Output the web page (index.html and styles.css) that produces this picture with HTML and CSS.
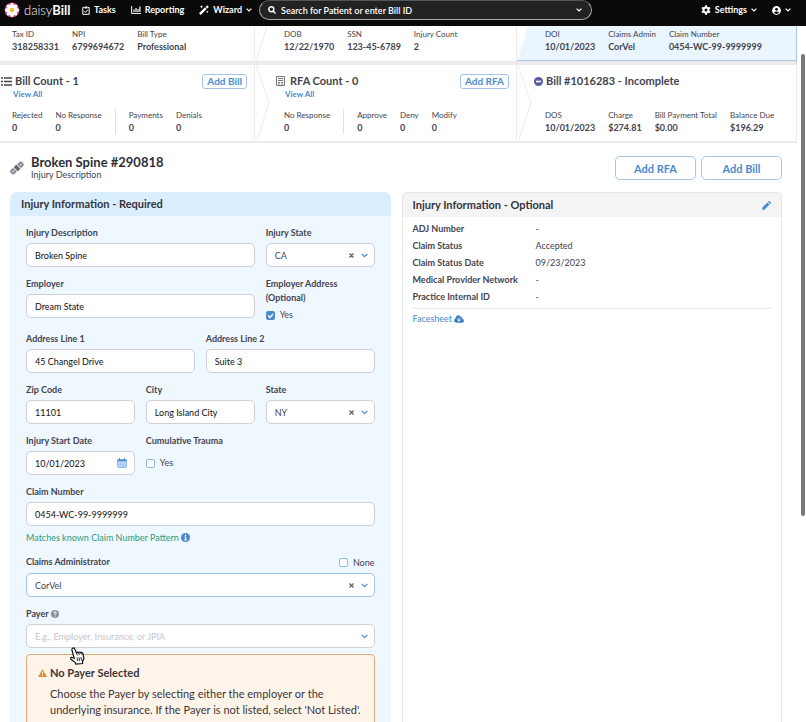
FILE: index.html
```html
<!DOCTYPE html>
<html lang="en">
<head>
    <meta charset="UTF-8">
    <meta name="viewport" content="width=device-width, initial-scale=1.0">
    <title>daisyBill - Broken Spine #290818</title>
    <link rel="stylesheet" href="styles.css">
</head>
<body>
    <header class="navbar">
        <a class="logo" href="#">
            <svg width="16" height="16" viewBox="0 0 16 16">
                <circle cx="8" cy="8" r="7.5" fill="#c93b86"/>
                <g fill="#fff">
                    <ellipse cx="8" cy="4" rx="2" ry="3"/>
                    <ellipse cx="8" cy="12" rx="2" ry="3"/>
                    <ellipse cx="4" cy="8" rx="3" ry="2"/>
                    <ellipse cx="12" cy="8" rx="3" ry="2"/>
                    <ellipse cx="8" cy="4" rx="2" ry="3" transform="rotate(45 8 8)"/>
                    <ellipse cx="8" cy="4" rx="2" ry="3" transform="rotate(135 8 8)"/>
                    <ellipse cx="8" cy="4" rx="2" ry="3" transform="rotate(225 8 8)"/>
                    <ellipse cx="8" cy="4" rx="2" ry="3" transform="rotate(315 8 8)"/>
                </g>
                <circle cx="8" cy="8" r="2.3" fill="#f3bd3c"/>
            </svg>
            <span>daisy<b>Bill</b></span>
        </a>
        <nav class="menu">
            <a href="#">
                <svg width="8" height="9" viewBox="0 0 8 9" fill="none" stroke="currentColor"><path d="M2.2 1.5H.8v6.8h6.4V1.5H5.8"/><path d="M2.5 1.5h3" stroke-width="2"/><path d="M2.3 5l1.3 1.3 2.3-2.5"/></svg>
                Tasks
            </a>
            <a href="#">
                <svg width="10" height="8" viewBox="0 0 10 8" fill="none" stroke="currentColor"><path d="M.6 0v7.4H10"/><path d="M3 6V3.5M5 6V2M7 6V3M8.9 6V.5" stroke-width="1.2"/></svg>
                Reporting
            </a>
            <a href="#">
                <svg width="10" height="10" viewBox="0 0 10 10" fill="currentColor"><path d="M0 8.3L6 2.3l1.7 1.7-6 6zM6.6 1.7L8.1.2 9.8 1.9 8.3 3.4zM2.5 0l.5 1.2 1.2.5L3 2.2l-.5 1.2L2 2.2.8 1.7 2 1.2zM8.3 5.5l.4 1 1 .4-1 .4-.4 1-.4-1-1-.4 1-.4z"/></svg>
                Wizard
                <svg class="caret" width="6" height="4" viewBox="0 0 6 4"><path d="M.6.6L3 3 5.4.6"/></svg>
            </a>
        </nav>
        <div class="search">
            <svg width="8" height="8" viewBox="0 0 8 8" fill="none" stroke="#fff" stroke-width="1.4"><circle cx="3.3" cy="3.3" r="2.5"/><path d="M5.2 5.2L7.5 7.5"/></svg>
            <input type="text" aria-label="Search" placeholder="Search for Patient or enter Bill ID">
            <svg class="caret" width="6" height="4" viewBox="0 0 6 4"><path d="M.6.6L3 3 5.4.6"/></svg>
        </div>
        <nav class="menu account">
            <a href="#">
                <svg width="10" height="10" viewBox="0 0 10 10"><circle cx="5" cy="5" r="2.5" fill="none" stroke="currentColor" stroke-width="2"/><path d="M5 .3v1.8M5 7.9v1.8M1 2.65l1.6.9M7.4 6.45l1.6.9M1 7.35l1.6-.9M7.4 3.55l1.6-.9" stroke="currentColor" stroke-width="2"/></svg>
                Settings
                <svg class="caret" width="6" height="4" viewBox="0 0 6 4"><path d="M.6.6L3 3 5.4.6"/></svg>
            </a>
            <a href="#" aria-label="Account">
                <svg width="9" height="9" viewBox="0 0 9 9"><circle cx="4.5" cy="4.5" r="4.4" fill="currentColor"/><circle cx="4.5" cy="3.3" r="1.4" fill="#0a0a0a"/><path d="M1.8 6.8Q4.5 4 7.2 6.8Q4.5 9 1.8 6.8" fill="#0a0a0a"/></svg>
                <svg class="caret" width="6" height="4" viewBox="0 0 6 4"><path d="M.6.6L3 3 5.4.6"/></svg>
            </a>
        </nav>
    </header>

    <div class="summary">
        <section class="card top">
            <dl class="stats">
                <div><dt>Tax ID</dt><dd>318258331</dd></div>
                <div><dt>NPI</dt><dd>6799694672</dd></div>
                <div><dt>Bill Type</dt><dd>Professional</dd></div>
            </dl>
        </section>
        <section class="card top">
            <svg class="edge" width="14" height="36" viewBox="0 0 14 36"><path d="M12 0L1 36"/></svg>
            <dl class="stats">
                <div><dt>DOB</dt><dd>12/22/1970</dd></div>
                <div><dt>SSN</dt><dd>123-45-6789</dd></div>
                <div><dt>Injury Count</dt><dd>2</dd></div>
            </dl>
        </section>
        <section class="card top active">
            <dl class="stats">
                <div><dt>DOI</dt><dd>10/01/2023</dd></div>
                <div><dt>Claims Admin</dt><dd>CorVel</dd></div>
                <div><dt>Claim Number</dt><dd>0454-WC-99-9999999</dd></div>
            </dl>
        </section>

        <section class="card">
            <div class="card-head">
                <svg width="11" height="9" viewBox="0 0 11 9" stroke="#44444f" stroke-width="1.5"><path d="M0 1h2M3 1h8M0 4.5h2M3 4.5h8M0 8h2M3 8h8"/></svg>
                <h2>Bill Count - 1</h2>
                <button class="btn small" type="button">Add Bill</button>
            </div>
            <a class="view-all" href="#">View All</a>
            <dl class="stats">
                <div><dt>Rejected</dt><dd>0</dd></div>
                <div><dt>No Response</dt><dd>0</dd></div>
                <div class="split"><dt>Payments</dt><dd>0</dd></div>
                <div><dt>Denials</dt><dd>0</dd></div>
            </dl>
        </section>
        <section class="card">
            <svg class="edge" width="16" height="78" viewBox="0 0 16 78"><path d="M1 0l13 38L1 78"/></svg>
            <div class="card-head">
                <svg width="9" height="10" viewBox="0 0 9 10" fill="none" stroke="#777780"><path d="M.5.5h8v9h-8zM2 2.5h5M2 4.5h5M2 6.5h2M5 6.5h2M2 8h2M5 8h2"/></svg>
                <h2>RFA Count - 0</h2>
                <button class="btn small" type="button">Add RFA</button>
            </div>
            <a class="view-all" href="#">View All</a>
            <dl class="stats">
                <div><dt>No Response</dt><dd>0</dd></div>
                <div class="split"><dt>Approve</dt><dd>0</dd></div>
                <div><dt>Deny</dt><dd>0</dd></div>
                <div><dt>Modify</dt><dd>0</dd></div>
            </dl>
        </section>
        <section class="card">
            <svg class="edge" width="16" height="78" viewBox="0 0 16 78"><path d="M1 0l13 38L1 78"/></svg>
            <div class="card-head">
                <svg width="9" height="9" viewBox="0 0 9 9"><circle cx="4.5" cy="4.5" r="4.5" fill="#5b5ba8"/><path d="M2 4.5h5" stroke="#fff" stroke-width="1.6"/></svg>
                <h2>Bill #1016283 - Incomplete</h2>
            </div>
            <dl class="stats">
                <div><dt>DOS</dt><dd>10/01/2023</dd></div>
                <div><dt>Charge</dt><dd>$274.81</dd></div>
                <div><dt>Bill Payment Total</dt><dd>$0.00</dd></div>
                <div><dt>Balance Due</dt><dd>$196.29</dd></div>
            </dl>
        </section>
    </div>

    <main class="page">
        <div class="title-row">
            <svg width="14" height="14" viewBox="0 0 14 14">
                <g transform="rotate(-42 7 7)">
                    <rect x="-1" y="4.2" width="16" height="5.600" rx="2.8" fill="#8d8d98"/>
                    <path d="M4.800 4v6M9.200 4v6" stroke="#fff"/>
                    <rect x="5.300" y="4.200" width="3.400" height="5.600" fill="#666672"/>
                    <path d="M1 7h2M11 7h2" stroke="#e4e4ea"/>
                </g>
            </svg>
            <div class="title">
                <h1>Broken Spine #290818</h1>
                <p>Injury Description</p>
            </div>
            <button class="btn" type="button">Add RFA</button>
            <button class="btn" type="button">Add Bill</button>
        </div>

        <div class="panels">
            <form class="panel required">
                <h2 class="panel-head">Injury Information - Required</h2>
                <div class="fields">
                    <div class="field w4">
                        <label for="description">Injury Description</label>
                        <input class="control" id="description" type="text" value="Broken Spine">
                    </div>
                    <div class="field w2">
                        <label for="injury-state">Injury State</label>
                        <div class="select">
                            <select class="control" id="injury-state"><option>CA</option></select>
                            <button class="clear" type="button" aria-label="Clear"><svg width="5" height="5" viewBox="0 0 5 5"><path d="M.5.5l4 4M4.5.5l-4 4"/></svg></button>
                            <svg class="caret" width="7" height="5" viewBox="0 0 7 5"><path d="M.7.8l2.8 2.8L6.3.8"/></svg>
                        </div>
                    </div>

                    <div class="field w4">
                        <label for="employer">Employer</label>
                        <input class="control" id="employer" type="text" value="Dream State">
                    </div>
                    <div class="field w2">
                        <span class="label">Employer Address<br>(Optional)</span>
                        <label class="check"><input type="checkbox" checked> Yes</label>
                    </div>

                    <div class="field w3">
                        <label for="address1">Address Line 1</label>
                        <input class="control" id="address1" type="text" value="45 Changel Drive">
                    </div>
                    <div class="field w3">
                        <label for="address2">Address Line 2</label>
                        <input class="control" id="address2" type="text" value="Suite 3">
                    </div>

                    <div class="field w2">
                        <label for="zip">Zip Code</label>
                        <input class="control" id="zip" type="text" value="11101">
                    </div>
                    <div class="field w2">
                        <label for="city">City</label>
                        <input class="control" id="city" type="text" value="Long Island City">
                    </div>
                    <div class="field w2">
                        <label for="state">State</label>
                        <div class="select">
                            <select class="control" id="state"><option>NY</option></select>
                            <button class="clear" type="button" aria-label="Clear"><svg width="5" height="5" viewBox="0 0 5 5"><path d="M.5.5l4 4M4.5.5l-4 4"/></svg></button>
                            <svg class="caret" width="7" height="5" viewBox="0 0 7 5"><path d="M.7.8l2.8 2.8L6.3.8"/></svg>
                        </div>
                    </div>

                    <div class="field w2">
                        <label for="start-date">Injury Start Date</label>
                        <div class="select">
                            <input class="control" id="start-date" type="text" value="10/01/2023">
                            <svg class="calendar" width="10" height="10" viewBox="0 0 10 10"><rect x=".5" y="1.5" width="9" height="8" rx="1" fill="#b9d6f5" stroke="#8db8e8"/><path d="M.5 2.5h9" stroke="#4a8bd0" stroke-width="1.5"/><path d="M2.5 0v2M7.5 0v2" stroke="#4a8bd0"/><path d="M3.5 4v5M6.5 4v5M1 6.5h8" stroke="#9cc3ee" stroke-width=".6"/></svg>
                        </div>
                    </div>
                    <div class="field w2">
                        <span class="label">Cumulative Trauma</span>
                        <label class="check tall"><input type="checkbox"> Yes</label>
                    </div>

                    <div class="field w6">
                        <label for="claim-number">Claim Number</label>
                        <input class="control" id="claim-number" type="text" value="0454-WC-99-9999999">
                        <p class="hint">Matches known Claim Number Pattern
                            <svg width="9" height="9" viewBox="0 0 9 9"><circle cx="4.5" cy="4.5" r="4.5" fill="#4a86cf"/><path d="M4.5 1.5v1.4M3.6 4.2h1v2.6M3.4 6.9h2.4" stroke="#fff" stroke-width="1.2" fill="none"/></svg>
                        </p>
                    </div>

                    <div class="field w6">
                        <div class="label-row">
                            <label for="administrator">Claims Administrator</label>
                            <label class="check"><input type="checkbox"> None</label>
                        </div>
                        <div class="select">
                            <select class="control focused" id="administrator"><option>CorVel</option></select>
                            <button class="clear" type="button" aria-label="Clear"><svg width="5" height="5" viewBox="0 0 5 5"><path d="M.5.5l4 4M4.5.5l-4 4"/></svg></button>
                            <svg class="caret" width="7" height="5" viewBox="0 0 7 5"><path d="M.7.8l2.8 2.8L6.3.8"/></svg>
                        </div>
                    </div>

                    <div class="field w6">
                        <label for="payer">Payer
                            <svg width="8" height="8" viewBox="0 0 8 8" fill="none"><circle cx="4" cy="4" r="4" fill="#8d919c"/><path d="M2.7 3.1Q2.8 1.9 4 1.9T5.3 3Q5.3 3.6 4 4.3V4.9M4 5.6v1" stroke="#fff"/></svg>
                        </label>
                        <div class="select">
                            <input class="control" id="payer" type="text" placeholder="E.g., Employer, Insurance, or JPIA">
                            <svg class="caret" width="7" height="5" viewBox="0 0 7 5"><path d="M.7.8l2.8 2.8L6.3.8"/></svg>
                            <svg class="pointer" width="16" height="18" viewBox="0 0 16 18"><path d="M3.6 1.2Q4.8.4 5.6 1.7L7.5 6Q8.4 4.6 9.6 5.6Q10.8 4.5 11.8 5.6Q13.3 5 13.8 6.5L14.8 10.5Q15 12.5 13.5 14L13.6 16.5L6.8 17.2L6.3 15.5L2 12.3Q1 10.8 2.5 10.3L5.2 11.3L2.9 3Q2.7 1.7 3.6 1.2Z" fill="#fff" stroke="#111" stroke-width="1.2"/><path d="M7.5 6l.9 2.4M9.7 5.7l.7 2.3M11.9 5.7l.6 2M8 10.5l.6 3.5M10 10.3l.5 3.5M12 10l.4 3.5" stroke="#111" stroke-width=".9"/></svg>
                        </div>
                        <div class="alert">
                            <svg width="9" height="8" viewBox="0 0 9 8"><path d="M4.5 0L9 8H0z" fill="#e38b36"/><path d="M4.5 2.5v2.7M4.5 6v1" stroke="#fff"/></svg>
                            <div>
                                <h3>No Payer Selected</h3>
                                <p>Choose the Payer by selecting either the employer or the underlying insurance. If the Payer is not listed, select 'Not Listed'.</p>
                            </div>
                        </div>
                    </div>
                </div>
            </form>

            <section class="panel optional">
                <h2 class="panel-head">Injury Information - Optional
                    <a href="#" aria-label="Edit"><svg width="9" height="9" viewBox="0 0 9 9" fill="#4a8bd0"><path d="M0 9l.6-2.7L5.4 1.5l2.1 2.1L2.7 8.4zM6 .9L6.7.2Q7.2-.2 7.7.3L8.7 1.3Q9.2 1.8 8.8 2.3L8.1 3z"/></svg></a>
                </h2>
                <dl class="details">
                    <dt>ADJ Number</dt><dd>-</dd>
                    <dt>Claim Status</dt><dd>Accepted</dd>
                    <dt>Claim Status Date</dt><dd>09/23/2023</dd>
                    <dt>Medical Provider Network</dt><dd>-</dd>
                    <dt>Practice Internal ID</dt><dd>-</dd>
                </dl>
                <a class="facesheet" href="#">Facesheet
                    <svg width="10" height="8" viewBox="0 0 10 8"><path d="M2.3 7.7Q0 7.5 0 5.3Q.2 3.6 1.6 3.2Q1.7.3 4.4.2Q6.3.2 7 2Q8.5 2 8.4 3.7Q10 4.2 10 5.7Q9.8 7.6 8 7.7Z" fill="#3f7fc6"/><path d="M5 2.8v3M3.4 4.6L5 6.2l1.6-1.6" stroke="#fff" fill="none"/></svg>
                </a>
            </section>
        </div>
    </main>
    <div class="scroll-thumb"></div>
</body>
</html>
```
FILE: styles.css
```css
* {
    box-sizing: border-box;
}
body {
    margin: 0;
    height: 100vh;
    overflow: hidden;
    position: relative;
    font-family: Lato, "Open Sans", sans-serif;
    font-size: 9px;
    line-height: 14px;
    color: #44444f;
    background-color: #fff;
}
h1, h2, h3, p, dl, dd {
    margin: 0;
}
a {
    color: #4a8bd0;
    text-decoration: none;
}
svg {
    flex: none;
}
input, select, button {
    font-family: inherit;
    font-size: 9px;
}
.caret {
    fill: none;
    stroke: currentColor;
    stroke-width: 1.2;
}

/* navigation */
.navbar {
    display: flex;
    align-items: flex-start;
    height: 26px;
    padding: 0 15px 0 4px;
    background-color: #0a0a0a;
    color: #fff;
}
.navbar a {
    display: flex;
    align-items: center;
    gap: 4px;
    height: 20px;
    color: #fff;
    font-weight: bold;
}
.navbar .logo {
    width: 78px;
    font-size: 13px;
    font-weight: 300;
}
.logo b {
    font-weight: bold;
}
.menu {
    display: flex;
    gap: 15px;
    margin-right: 7px;
}
.menu.account {
    margin: 0 0 0 auto;
}
.search {
    display: flex;
    align-items: center;
    gap: 5px;
    flex: 0 1 333px;
    height: 20px;
    padding: 0 9px 0 8px;
    border: 1px solid #aaa;
    border-top-color: #555;
    border-radius: 10px;
    background-color: #222;
}
.search input {
    flex: 1;
    min-width: 0;
    padding: 0;
    border: 0;
    background: none;
    color: #fff;
    font-weight: 600;
}
.search input::placeholder {
    color: #fff;
    opacity: 1;
}

/* summary cards */
.summary {
    display: grid;
    grid-template-columns: 255fr 262fr 280fr;
    margin-right: 9px;
}
.card {
    position: relative;
    height: 78px;
    padding: 8px 7px 0 29px;
    border-bottom: 2px solid #ececec;
    border-right: 1px solid #ececec;
}
.card:nth-child(3n + 1) {
    padding-left: 12px;
}
.card:nth-child(3n) {
    padding-left: 28px;
}
.card.top {
    height: 39px;
    padding-top: 2px;
    border-bottom: 4px solid #ececec;
}
.card.active {
    background: linear-gradient(107deg, #fff 10px, #ebf5fe 11px);
    border-right-color: #a9c9ea;
    box-shadow: inset 0 -1px #a9c9ea;
}
.edge {
    position: absolute;
    top: 0;
    left: 0;
    fill: none;
    stroke: #ececec;
}
.card-head {
    display: flex;
    align-items: center;
    gap: 3px;
    height: 16px;
    margin-left: -11px;
}
.card:nth-child(5) .card-head {
    gap: 5px;
    margin-left: -8px;
}
.card-head h2 {
    flex: 1;
    font-size: 11px;
}
.view-all {
    display: block;
    margin: 1px 0 0 1px;
    font-size: 8px;
    font-weight: bold;
    line-height: 8px;
}
.stats {
    display: flex;
    gap: 13px;
}
.card:not(.top) .stats {
    position: absolute;
    bottom: 7px;
}
.stats dt {
    font-size: 8px;
    line-height: 12px;
}
.stats dd {
    font-weight: bold;
    line-height: 13px;
}
.stats .split {
    padding-left: 13px;
    border-left: 1px solid #e0e0e0;
}

/* buttons */
.btn {
    width: 81px;
    height: 24px;
    border: 1px solid #a5c5e8;
    border-radius: 5px;
    background-color: #fff;
    color: #4a8bd0;
    font-size: 11px;
    font-weight: bold;
}
.btn.small {
    width: auto;
    height: 15px;
    padding: 0 4px;
    border-radius: 3px;
    font-size: 10px;
    line-height: 12px;
}

/* page */
.page {
    padding: 12px 24px 0 10px;
}
.title-row {
    display: flex;
    align-items: center;
    gap: 5px;
    margin-bottom: 11px;
}
.title {
    flex: 1;
    margin-left: 2px;
}
.title h1 {
    font-size: 13px;
    line-height: 14px;
    color: #2e2e38;
}
.title p {
    line-height: 12px;
}
.panels {
    display: grid;
    grid-template-columns: 1fr 1fr;
    gap: 11px;
}
.panel {
    border-radius: 7px;
    overflow: hidden;
}
.panel-head {
    display: flex;
    align-items: center;
    justify-content: space-between;
    height: 24px;
    padding: 0 10px;
    font-size: 11px;
    color: #33333d;
}
.required {
    background-color: #eff7ff;
}
.required .panel-head {
    padding: 0 11px;
    background-color: #d9efff;
}
.optional {
    border: 1px solid #e6e6e6;
    border-radius: 5px;
}
.optional .panel-head {
    background-color: #f4f4f4;
}
.panel-head a {
    display: flex;
}
.details {
    display: grid;
    grid-template-columns: 123px 1fr;
    margin: 0 10px;
    padding: 3px 0;
    line-height: 17px;
    border-bottom: 1px solid #e6e6e6;
}
.details dt {
    font-weight: bold;
}
.facesheet {
    display: inline-block;
    margin: 3px 10px;
}

/* form */
.fields {
    display: grid;
    grid-template-columns: repeat(6, 1fr);
    gap: 10px 11px;
    padding: 10px 16px 16px;
}
.field {
    display: flex;
    flex-direction: column;
    gap: 3px;
}
.w2 { grid-column: span 2; }
.w3 { grid-column: span 3; }
.w4 { grid-column: span 4; }
.w6 { grid-column: span 6; }
.field label, .label {
    font-weight: bold;
}
.control {
    width: 100%;
    height: 24px;
    padding: 0 8px;
    border: 1px solid #cfcfd6;
    border-radius: 5px;
    background-color: #fff;
    color: #111;
}
select.control {
    appearance: none;
    color: #44444f;
}
.control.focused {
    border-color: #9dc3ec;
}
.control::placeholder {
    color: #c6c6ce;
}
.select {
    position: relative;
    display: flex;
}
.select .caret {
    position: absolute;
    top: 10px;
    right: 7px;
    color: #4a8bd0;
}
.clear {
    position: absolute;
    top: 9px;
    right: 20px;
    display: flex;
    padding: 1px;
    border: 0;
    background: none;
}
.clear svg {
    stroke: #666;
    stroke-width: 1.4;
}
.calendar {
    position: absolute;
    top: 7px;
    right: 8px;
}
.field .check {
    display: flex;
    align-items: center;
    gap: 5px;
    font-weight: normal;
}
.field .check.tall {
    height: 24px;
}
.check input {
    appearance: none;
    width: 9px;
    height: 9px;
    margin: 0;
    border: 1px solid #8fb8e4;
    border-radius: 2px;
    background-color: #fff;
}
.check input:checked {
    border-color: #4a8bd0;
    background: #4a8bd0 url("data:image/svg+xml,%3Csvg xmlns='http://www.w3.org/2000/svg' viewBox='0 0 7 7'%3E%3Cpath d='M1 3.5l2 2 3-3.5' fill='none' stroke='white' stroke-width='1.3'/%3E%3C/svg%3E");
}
.label-row {
    display: flex;
    justify-content: space-between;
    height: 15px;
}
.hint {
    margin-top: 2px;
    color: #2b9a78;
}
.hint svg, .field label svg, .facesheet svg {
    vertical-align: -1px;
}
.alert {
    display: flex;
    align-items: flex-start;
    gap: 3px;
    margin-top: 3px;
    padding: 10px 9px 12px 11px;
    border: 1px solid #e0aa72;
    border-radius: 4px;
    background-color: #fff4ea;
    color: #3b3638;
    font-size: 11px;
}
.alert > svg {
    margin-top: 4px;
}
.alert h3 {
    font-size: 11px;
    line-height: 16px;
}
.alert p {
    margin-top: 5px;
    line-height: 16px;
}

/* overlays */
.pointer {
    position: absolute;
    top: 23px;
    left: 43px;
    z-index: 1;
}
.scroll-thumb {
    position: absolute;
    top: 54px;
    right: 1px;
    width: 4px;
    height: 64%;
    border-radius: 2px;
    background-color: #77777f;
}
```
